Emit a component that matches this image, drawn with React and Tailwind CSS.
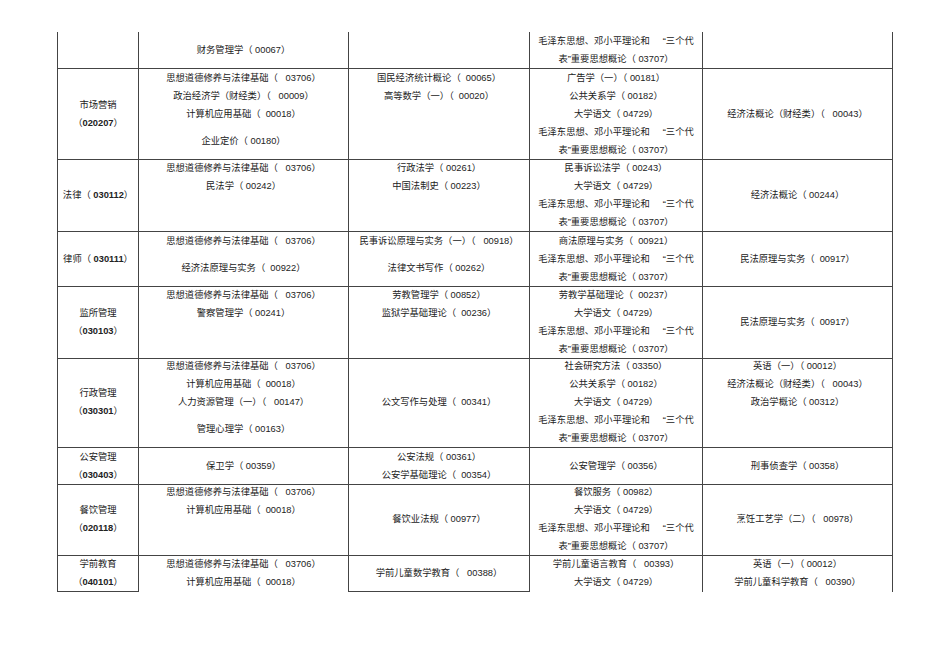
import React from "react";

const MZ1 = "毛泽东思想、邓小平理论和     “三个代";
const MZ2 = "表”重要思想概论（ 03707）";
const SX = "思想道德修养与法律基础（   03706）";
const JS = "计算机应用基础（  00018）";
const DX = "大学语文（ 04729）";

const L = (t, gap) => ({ t, gap });

function Code({ name, code, inline }) {
  if (inline) {
    return (
      <div className="leading-[18px]">
        {name}（ <b className="font-bold">{code}</b>）
      </div>
    );
  }
  return (
    <div className="flex flex-col items-center">
      <div className="leading-[18px]">{name}</div>
      <div className="leading-[18px]">
        （<b className="font-bold">{code}</b>）
      </div>
    </div>
  );
}

const rows = [
  {
    h: "h-[37px]",
    c1: null,
    cells: [
      { lines: ["财务管理学（ 00067）"], v: "c" },
      { lines: [] },
      { lines: [MZ1, MZ2] },
      { lines: [] },
    ],
  },
  {
    h: "h-[90px]",
    c1: { name: "市场营销", code: "020207" },
    cells: [
      { lines: [SX, "政治经济学（财经类）（   00009）", JS, L("企业定价（ 00180）", true)] },
      { lines: ["国民经济统计概论（  00065）", "高等数学（一）（  00020）"] },
      { lines: ["广告学（一）（ 00181）", "公共关系学（ 00182）", DX, MZ1, MZ2] },
      { lines: ["经济法概论（财经类）（   00043）"], v: "c" },
    ],
  },
  {
    h: "h-[73px]",
    c1: { name: "法律", code: "030112", inline: true },
    cells: [
      { lines: [SX, "民法学（ 00242）"] },
      { lines: ["行政法学（ 00261）", "中国法制史（ 00223）"] },
      { lines: ["民事诉讼法学（ 00243）", DX, MZ1, MZ2] },
      { lines: ["经济法概论（ 00244）"], v: "c" },
    ],
  },
  {
    h: "h-[54px]",
    c1: { name: "律师", code: "030111", inline: true },
    cells: [
      { lines: [SX, L("经济法原理与实务（  00922）", true)] },
      { lines: ["民事诉讼原理与实务（一）（   00918）", L("法律文书写作（ 00262）", true)] },
      { lines: ["商法原理与实务（  00921）", MZ1, MZ2] },
      { lines: ["民法原理与实务（  00917）"], v: "c" },
    ],
  },
  {
    h: "h-[71px]",
    c1: { name: "监所管理", code: "030103" },
    cells: [
      { lines: [SX, "警察管理学（ 00241）"] },
      { lines: ["劳教管理学（ 00852）", "监狱学基础理论（  00236）"] },
      { lines: ["劳教学基础理论（  00237）", DX, MZ1, MZ2] },
      { lines: ["民法原理与实务（  00917）"], v: "c" },
    ],
  },
  {
    h: "h-[91px]",
    c1: { name: "行政管理", code: "030301" },
    cells: [
      { lines: [SX, JS, "人力资源管理（一）（   00147）", L("管理心理学（ 00163）", true)] },
      { lines: ["公文写作与处理（  00341）"], v: "c" },
      { lines: ["社会研究方法（ 03350）", "公共关系学（ 00182）", DX, MZ1, MZ2] },
      { lines: ["英语（一）（ 00012）", "经济法概论（财经类）（   00043）", "政治学概论（ 00312）"] },
    ],
  },
  {
    h: "h-[35px]",
    c1: { name: "公安管理", code: "030403" },
    cells: [
      { lines: ["保卫学（ 00359）"], v: "c" },
      { lines: ["公安法规（ 00361）", "公安学基础理论（  00354）"] },
      { lines: ["公安管理学（ 00356）"], v: "c" },
      { lines: ["刑事侦查学（ 00358）"], v: "c" },
    ],
  },
  {
    h: "h-[72px]",
    c1: { name: "餐饮管理", code: "020118" },
    cells: [
      { lines: [SX, JS] },
      { lines: ["餐饮业法规（ 00977）"], v: "c" },
      { lines: ["餐饮服务（ 00982）", DX, MZ1, MZ2] },
      { lines: ["烹饪工艺学（二）（   00978）"], v: "c" },
    ],
  },
  {
    h: "h-[36px]",
    last: true,
    c1: { name: "学前教育", code: "040101" },
    cells: [
      { lines: [SX, JS], noB: true },
      { lines: ["学前儿童数学教育（   00388）"], v: "c" },
      { lines: ["学前儿童语言教育（   00393）", DX], noB: true },
      { lines: ["英语（一）（ 00012）", "学前儿童科学教育（   00390）"], noB: true },
    ],
  },
];

function Cell({ cell }) {
  const vc = cell.v === "c" ? "justify-center" : "justify-start";
  const b = cell.noB ? "" : "border-b";
  return (
    <div className={`flex flex-col items-center ${vc} border-r ${b} border-[#444]`}>
      {cell.lines.map((ln, i) => {
        const o = typeof ln === "string" ? { t: ln } : ln;
        return (
          <div
            key={i}
            className={`whitespace-pre leading-[18px] ${o.gap ? "mt-[9px]" : ""}`}
          >
            {o.t}
          </div>
        );
      })}
    </div>
  );
}

export default function App() {
  return (
    <div
      className="w-[950px] h-[671px] bg-white text-[#222] text-[9.3px] overflow-hidden"
      style={{ fontFamily: '"Liberation Sans", "Noto Sans CJK SC", sans-serif' }}
    >
      <div className="ml-[57px] pt-[32px] flex flex-col w-[836px]">
        {rows.map((r, i) => (
          <div key={i} className={`grid grid-cols-[82px_210px_181px_173px_190px] ${r.h}`}>
            <div className="flex items-center justify-center border-l border-r border-b border-[#444]">
              {r.c1 && <Code {...r.c1} />}
            </div>
            {r.cells.map((c, j) => (
              <Cell key={j} cell={c} />
            ))}
          </div>
        ))}
      </div>
    </div>
  );
}
